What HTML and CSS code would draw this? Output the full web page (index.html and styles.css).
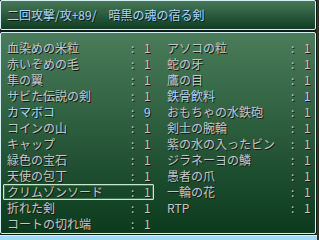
FILE: index.html
```html
<!DOCTYPE html>
<html lang="ja">
<head>
<meta charset="utf-8">
<link rel="stylesheet" href="styles.css">
</head>
<body>
<div class="screen">
  <div class="win help">
    <span class="title">二回攻撃/攻+89/　暗黒の魂の宿る剣</span>
  </div>
  <div class="win list">
    <div class="grid">
      <div class="item"><span class="name">血染めの米粒</span><span class="colon">:</span><span class="num">1</span></div>
      <div class="item"><span class="name">アソコの粒</span><span class="colon">:</span><span class="num">1</span></div>
      <div class="item"><span class="name">赤いぞめの毛</span><span class="colon">:</span><span class="num">1</span></div>
      <div class="item"><span class="name">蛇の牙</span><span class="colon">:</span><span class="num">1</span></div>
      <div class="item"><span class="name">隼の翼</span><span class="colon">:</span><span class="num">1</span></div>
      <div class="item"><span class="name">鷹の目</span><span class="colon">:</span><span class="num">1</span></div>
      <div class="item"><span class="name">サビた伝説の剣</span><span class="colon">:</span><span class="num">1</span></div>
      <div class="item on"><span class="name">鉄骨飲料</span><span class="colon">:</span><span class="num">1</span></div>
      <div class="item on"><span class="name">カマボコ</span><span class="colon">:</span><span class="num">9</span></div>
      <div class="item"><span class="name">おもちゃの水鉄砲</span><span class="colon">:</span><span class="num">1</span></div>
      <div class="item"><span class="name">コインの山</span><span class="colon">:</span><span class="num">1</span></div>
      <div class="item"><span class="name">剣士の腕輪</span><span class="colon">:</span><span class="num">1</span></div>
      <div class="item"><span class="name">キャップ</span><span class="colon">:</span><span class="num">1</span></div>
      <div class="item"><span class="name">紫の水の入ったビン</span><span class="colon">:</span><span class="num">1</span></div>
      <div class="item"><span class="name">緑色の宝石</span><span class="colon">:</span><span class="num">1</span></div>
      <div class="item"><span class="name">ジラネーヨの鱗</span><span class="colon">:</span><span class="num">1</span></div>
      <div class="item"><span class="name">天使の包丁</span><span class="colon">:</span><span class="num">1</span></div>
      <div class="item"><span class="name">愚者の爪</span><span class="colon">:</span><span class="num">1</span></div>
      <div class="item sel"><span class="name">クリムゾンソード</span><span class="colon">:</span><span class="num">1</span></div>
      <div class="item"><span class="name">一輪の花</span><span class="colon">:</span><span class="num">1</span></div>
      <div class="item"><span class="name">折れた剣</span><span class="colon">:</span><span class="num">1</span></div>
      <div class="item"><span class="name">RTP</span><span class="colon">:</span><span class="num">1</span></div>
      <div class="item"><span class="name">コートの切れ端</span><span class="colon">:</span><span class="num">1</span></div>
    </div>
  </div>
  <div class="below"></div>
</div>
</body>
</html>
```

FILE: styles.css
```css
html, body {
  margin: 0;
  padding: 0;
}
body {
  width: 319px;
  height: 240px;
  overflow: hidden;
  background: #27301f;
  font-family: "Noto Sans CJK JP", "Noto Sans", sans-serif;
  font-size: 12px;
}
.screen {
  width: 319px;
  height: 240px;
  display: flex;
  flex-direction: column;
  background: linear-gradient(90deg, #27301f 0, #27301f 316px, #3a3a2a 317px, #2a2f22 319px);
}
.win {
  box-sizing: border-box;
  width: 316px;
  border: 1px solid #d6eefc;
  border-radius: 2px;
  box-shadow: 0 0 0 1px #141a12;
}
.help {
  height: 30px;
  background: linear-gradient(#467858, #0f3d22);
  display: flex;
  align-items: center;
  padding-left: 6px;
}
.title {
  color: #a9d4ff;
  text-shadow: 1px 1px 0 #0a1a10;
  line-height: 16px;
}
.list {
  margin-top: 2px;
  height: 204px;
  background: linear-gradient(#4a7c5a, #0b3a1d);
  padding-top: 7px;
}
.grid {
  display: grid;
  grid-template-columns: 160px 154px;
  grid-auto-rows: 16px;
  margin-left: -1px;
}
.item {
  position: relative;
  display: grid;
  grid-template-columns: 124px 13px 10px;
  padding-left: 7px;
  line-height: 16px;
  color: #c6c6c6;
  text-shadow: 1px 1px 0 #121a14;
  white-space: nowrap;
}
.item.on {
  color: #a9d4ff;
}
.item.sel::before {
  content: "";
  position: absolute;
  left: 3px;
  top: 0;
  width: 151px;
  height: 16px;
  box-sizing: border-box;
  border: 1px solid #c4eccc;
  box-shadow: inset 0 0 0 1px rgba(160, 220, 180, 0.3);
  border-radius: 1px;
}
.below {
  margin-top: 1px;
  height: 4px;
  width: 317px;
  background: #9fdcf4;
  border-top: 1px solid #d6f2ff;
}
```
